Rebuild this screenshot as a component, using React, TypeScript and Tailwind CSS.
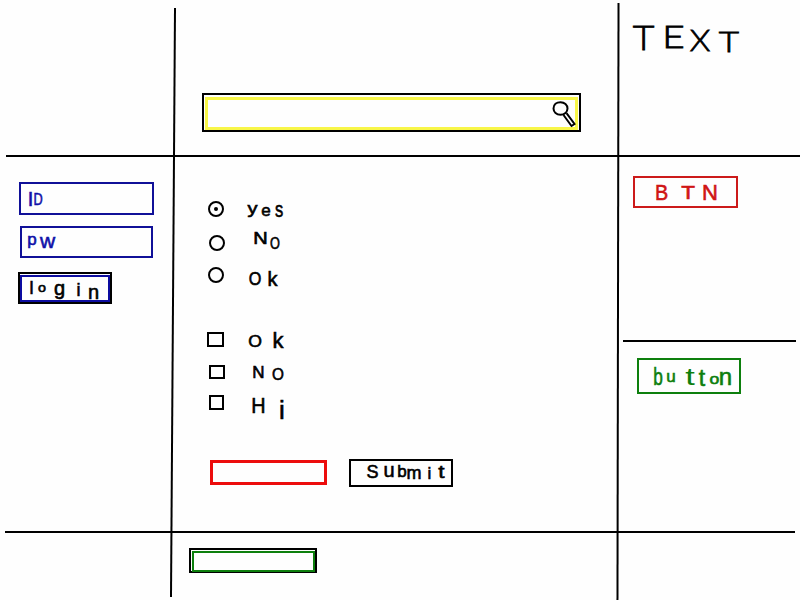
import React from "react";

/* Each entry is one hand-placed character and the classes that size and nudge it. */
type Glyph = [string, string];

function Word({ glyphs, className = "" }: { glyphs: Glyph[]; className?: string }) {
  return (
    <span className={`flex items-start leading-none ${className}`}>
      {glyphs.map(([char, cls], i) => (
        <span key={i} className={`flex shrink-0 justify-center leading-none ${cls}`}>
          {char}
        </span>
      ))}
    </span>
  );
}

function Magnifier() {
  return (
    <svg
      className="h-[30px] w-[26px]"
      viewBox="0 0 26 30"
      fill="none"
      stroke="#000"
      strokeWidth="2"
    >
      <path d="M2.5 9.5C2.5 5.5 5.5 3.2 9.5 3.2S16.500 6 16.500 9.500 13.500 15.800 9.500 15.800 2.500 13 2.500 9.500Z" />
      <path d="M12.500 16 20.500 27 23.500 25 15.500 14.200" />
    </svg>
  );
}

function Radio({ checked = false, className }: { checked?: boolean; className: string }) {
  return (
    <span
      className={`flex h-4 w-4 shrink-0 items-center justify-center rounded-full border-2 border-black ${className}`}
    >
      {checked && <span className="h-1 w-1 rounded-full bg-black" />}
    </span>
  );
}

export default function App() {
  return (
    <div className="grid h-[600px] w-[800px] grid-cols-[172px_2px_443px_2px_1fr] grid-rows-[155px_2px_374px_2px_1fr] overflow-hidden bg-[#fefefe] font-['Liberation_Sans',Arial,sans-serif] text-black [-webkit-text-stroke:0.6px]">
      {/* Dividers */}
      <div className="col-start-2 row-span-full row-start-1 mt-2 mb-[3px] rotate-[0.39deg] bg-black" />
      <div className="col-start-4 row-span-full row-start-1 mt-[3px] rotate-[0.1deg] bg-black" />
      <div className="col-span-full col-start-1 row-start-2 ml-[6px] bg-black" />
      <div className="col-span-full col-start-1 row-start-4 mr-[5px] ml-[5px] bg-black" />

      {/* Search */}
      <header className="col-start-3 row-start-1 pt-[93px] pl-[28px]">
        <div className="h-[39px] w-[379px] border-2 border-black pt-[2px] pr-px pl-px">
          <div className="flex h-[33px] justify-end border-[3px] border-[#f8f648]">
            <div className="-mt-px -mr-[2px]">
              <Magnifier />
            </div>
          </div>
        </div>
      </header>

      {/* Title */}
      <h1 className="col-start-5 row-start-1">
        <Word
          glyphs={[
            ["T", "ml-[13px] w-[23px] mt-[20px] text-[34px] scale-x-110"],
            ["E", "ml-[9px] w-[19px] mt-[21px] text-[31px] scale-x-125"],
            ["X", "ml-[7px] w-[20px] mt-[24px] text-[30px] scale-x-110"],
            ["T", "ml-[7px] w-[24px] mt-[27px] text-[28px] scale-x-125"],
          ]}
          className="font-['Lato'] font-light [-webkit-text-stroke:0.8px]"
        />
      </h1>

      {/* Login panel */}
      <aside className="col-start-1 row-start-3 flex flex-col items-start pt-[25px] text-[#1010a8]">
        <div className="ml-[19px] h-[33px] w-[135px] border-2 border-[#101098]">
          <Word
            glyphs={[
              ["I", "ml-[8px] w-[3px] mt-[5px] text-[20px]"],
              ["D", "ml-[2px] w-[8px] mt-[7px] text-[17px] scale-x-75"],
            ]}
          />
        </div>
        <div className="mt-[11px] ml-[20px] h-[32px] w-[133px] border-2 border-[#101098]">
          <Word
            glyphs={[
              ["p", "ml-[6px] w-[8px] mt-[3px] text-[17px]"],
              ["w", "ml-[4px] w-[15px] mt-[2px] text-[21px]"],
            ]}
          />
        </div>
        <button className="mt-[14px] ml-[18px] h-[32px] w-[94px] border-2 border-black pt-px text-black">
          <span className="block h-[27px] border-2 border-[#0c0ca0]">
            <Word
              glyphs={[
                ["l", "ml-[8px] w-[3px] mt-[2px] text-[18px]"],
                ["o", "ml-[5px] w-[8px] mt-[4px] text-[13px] scale-x-110"],
                ["g", "ml-[9px] w-[9px] mt-[1px] text-[20px]"],
                ["i", "ml-[13px] w-[3px] mt-[4px] text-[18px]"],
                ["n", "ml-[9px] w-[9px] mt-[5px] text-[20px]"],
              ]}
            />
          </span>
        </button>
      </aside>

      {/* Options form */}
      <main className="col-start-3 row-start-3 pt-[44px]">
        <div className="flex h-[34px] items-start">
          <Radio checked className="ml-[34px]" />
          <Word
            glyphs={[
              ["y", "ml-[24px] w-[9px] mt-0 text-[16px] scale-x-125"],
              ["e", "ml-[4px] w-[10px] mt-[1px] text-[17px]"],
              ["s", "ml-[4px] w-[8px] mt-[-2px] text-[22px] scale-x-75"],
            ]}
          />
        </div>
        <div className="flex h-[32px] items-start">
          <Radio className="ml-[35px]" />
          <Word
            glyphs={[
              ["N", "ml-[28px] w-[15px] mt-[-4px] text-[16px] scale-x-125"],
              ["O", "ml-[2px] w-[10px] mt-0 text-[17px] scale-x-75"],
            ]}
          />
        </div>
        <div className="flex h-[65px] items-start">
          <Radio className="ml-[34px]" />
          <Word
            glyphs={[
              ["O", "ml-[25px] w-[12px] mt-[3px] text-[18px] scale-x-90"],
              ["k", "ml-[7px] w-[9px] mt-[2px] text-[20px]"],
            ]}
          />
        </div>
        <div className="flex h-[33px] items-start">
          <span className="ml-[33px] h-[15px] w-[17px] border-2 border-black" />
          <Word
            glyphs={[
              ["O", "ml-[24px] w-[14px] mt-[2px] text-[16px] scale-x-110"],
              ["k", "ml-[11px] w-[10px] mt-[-2px] text-[22px]"],
            ]}
          />
        </div>
        <div className="flex h-[30px] items-start">
          <span className="ml-[35px] h-[14px] w-[16px] border-2 border-black" />
          <Word
            glyphs={[
              ["N", "ml-[28px] w-[11px] mt-[-1px] text-[17px]"],
              ["O", "ml-[8px] w-[12px] mt-[1px] text-[17px] scale-x-90"],
            ]}
          />
        </div>
        <div className="flex h-[64px] items-start">
          <span className="ml-[35px] h-[15px] w-[15px] border-2 border-black" />
          <Word
            glyphs={[
              ["H", "ml-[28px] w-[13px] mt-0 text-[22px] scale-x-90"],
              ["i", "ml-[14px] w-[6px] mt-[2px] text-[26px]"],
            ]}
          />
        </div>
        <div className="flex items-start">
          <div className="mt-px ml-[36px] h-[25px] w-[117px] border-[3px] border-[#ec0c0c]" />
          <button className="ml-[22px] flex h-[28px] w-[104px] items-start border-2 border-black">
            <Word
              glyphs={[
                ["S", "ml-[16px] w-[11px] mt-[2px] text-[18px]"],
                ["u", "ml-[6px] w-[10px] mt-[-1px] text-[20px]"],
                ["b", "ml-[4px] w-[8px] mt-[2px] text-[17px]"],
                ["m", "ml-[1px] w-[14px] mt-[3px] text-[18px]"],
                ["i", "ml-[7px] w-[3px] mt-[4px] text-[17px]"],
                ["t", "ml-[6px] w-[9px] mt-[2px] text-[18px] scale-x-125"],
              ]}
            />
          </button>
        </div>
      </main>

      {/* Side buttons */}
      <aside className="col-start-5 row-start-3 flex flex-col items-start pt-[19px]">
        <button className="ml-[14px] flex h-[32px] w-[105px] items-start border-2 border-[#cc1a1a] text-[#d01515]">
          <Word
            glyphs={[
              ["B", "ml-[21px] w-[11px] mt-[4px] text-[22px] scale-x-90"],
              ["T", "ml-[14px] w-[14px] mt-[6px] text-[18px] scale-x-125"],
              ["N", "ml-[7px] w-[16px] mt-[4px] text-[22px]"],
            ]}
          />
        </button>
        <div className="mt-[132px] ml-[4px] h-[2px] w-[173px] bg-black" />
        <button className="mt-[16px] ml-[18px] flex h-[36px] w-[104px] items-start border-2 border-[#0d7f0d] text-[#0d7f0d]">
          <Word
            glyphs={[
              ["b", "ml-[15px] w-[8px] mt-[6px] text-[23px] scale-x-75"],
              ["u", "ml-[5px] w-[8px] mt-[8px] text-[17px]"],
              ["t", "ml-[8px] w-[14px] mt-[6px] text-[23px] scale-x-150 [-webkit-text-stroke:0px]"],
              ["t", "ml-[2px] w-[6px] mt-[7px] text-[23px]"],
              ["o", "ml-[4px] w-[11px] mt-[12px] text-[14px] scale-x-125"],
              ["n", "ml-0 w-[11px] mt-[5px] text-[24px]"],
            ]}
          />
        </button>
      </aside>

      {/* Footer field */}
      <footer className="col-start-3 row-start-5 pt-[15px] pl-[15px]">
        <div className="h-[25px] w-[128px] border-2 border-black pt-px pl-px">
          <div className="h-[21px] border-2 border-[#0d7f0d]" />
        </div>
      </footer>
    </div>
  );
}
